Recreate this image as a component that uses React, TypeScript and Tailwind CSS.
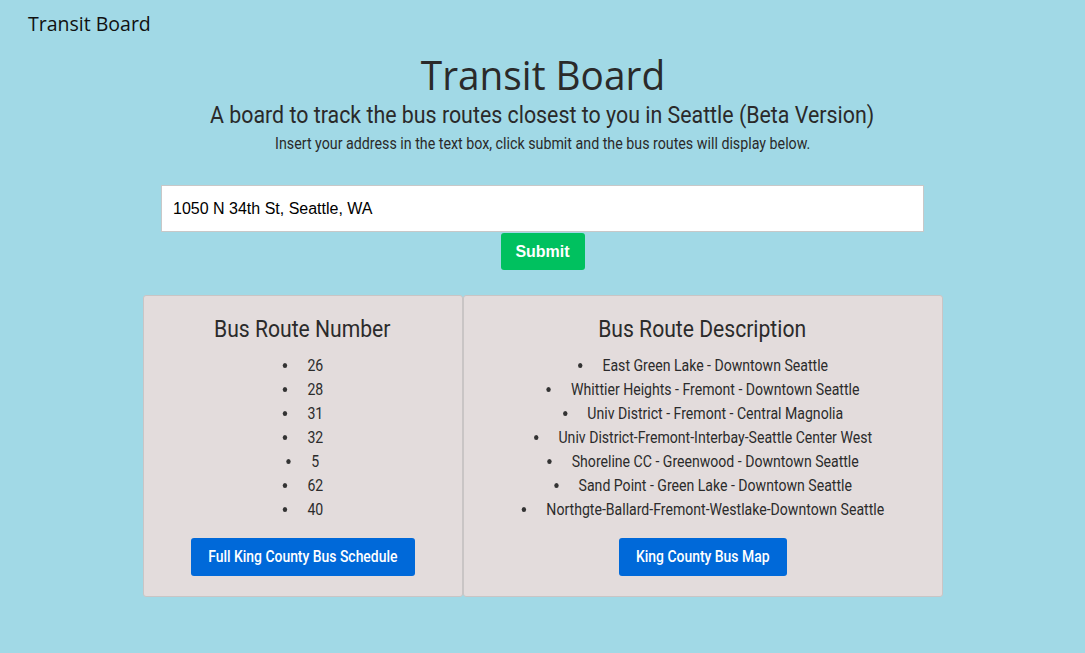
import React from "react";

const numbers = ["26", "28", "31", "32", "5", "62", "40"];
const descs = [
  "East Green Lake - Downtown Seattle",
  "Whittier Heights - Fremont - Downtown Seattle",
  "Univ District - Fremont - Central Magnolia",
  "Univ District-Fremont-Interbay-Seattle Center West",
  "Shoreline CC - Greenwood - Downtown Seattle",
  "Sand Point - Green Lake - Downtown Seattle",
  "Northgte-Ballard-Fremont-Westlake-Downtown Seattle",
];

function Card({ title, items, button, btnW, className }: { title: string; items: string[]; button: string; btnW: string; className: string }) {
  return (
    <div className={`bg-[#e3dcdc] border border-[#c9c5c5] rounded-[3px] flex flex-col items-center pt-[18px] ${className}`}>
      <h2 className="text-[24px] leading-[30px] text-[#2b2b2b] font-['Roboto',sans-serif] scale-x-[0.88] whitespace-nowrap">
        {title}
      </h2>
      <ul className="mt-[10px] list-disc list-inside text-center text-[16px] leading-[24px] text-[#2b2b2b] font-['Roboto',sans-serif] scale-x-[0.88] whitespace-nowrap">
        {items.map((it) => (
          <li key={it} className="marker:text-[#333]">
            <span className="pl-[6px]">{it}</span>
          </li>
        ))}
      </ul>
      <button className={`mt-[16px] h-[38px] ${btnW} bg-[#0069d9] text-white rounded-[3px] text-[16px] font-medium font-['Roboto',sans-serif] whitespace-nowrap flex items-center justify-center`}>
        <span className="inline-block scale-x-[0.87]">{button}</span>
      </button>
    </div>
  );
}

export default function App() {
  return (
    <div className="min-h-[653px] w-full bg-[#a1d9e6] font-['Roboto',sans-serif]">
      <div className="pl-[28px] pt-[12px] text-[19.5px] leading-[24px] text-[#111] font-['Open_Sans',sans-serif]">
        Transit Board
      </div>
      <div className="flex flex-col items-center mt-[17px]">
        <h1 className="text-[40px] leading-[44px] text-[#2a2a2a] font-['Open_Sans',sans-serif] scale-x-[0.97] whitespace-nowrap">
          Transit Board
        </h1>
        <h3 className="text-[24px] leading-[30px] text-[#2a2a2a] mt-[3px] scale-x-[0.89] whitespace-nowrap">
          A board to track the bus routes closest to you in Seattle (Beta Version)
        </h3>
        <p className="text-[16px] leading-[20px] text-[#2a2a2a] mt-[4px] scale-x-[0.89] whitespace-nowrap">
          Insert your address in the text box, click submit and the bus routes will display below.
        </p>
        <input
          readOnly
          value="1050 N 34th St, Seattle, WA"
          className="mt-[31px] w-[763px] h-[47px] bg-white border border-[#c8c8c8] px-[11px] text-[16px] text-black font-['Liberation_Sans',sans-serif] outline-none"
        />
        <button className="mt-[1px] h-[37px] w-[84px] bg-[#00c15f] rounded-[3px] text-white text-[16px] font-bold font-['Liberation_Sans',sans-serif]">
          Submit
        </button>
        <div className="mt-[25px] flex w-[800px]">
          <Card title="Bus Route Number" items={numbers} button="Full King County Bus Schedule" btnW="w-[224px]" className="w-[320px] h-[302px]" />
          <Card title="Bus Route Description" items={descs} button="King County Bus Map" btnW="w-[168px]" className="w-[480px] h-[302px]" />
        </div>
      </div>
    </div>
  );
}
